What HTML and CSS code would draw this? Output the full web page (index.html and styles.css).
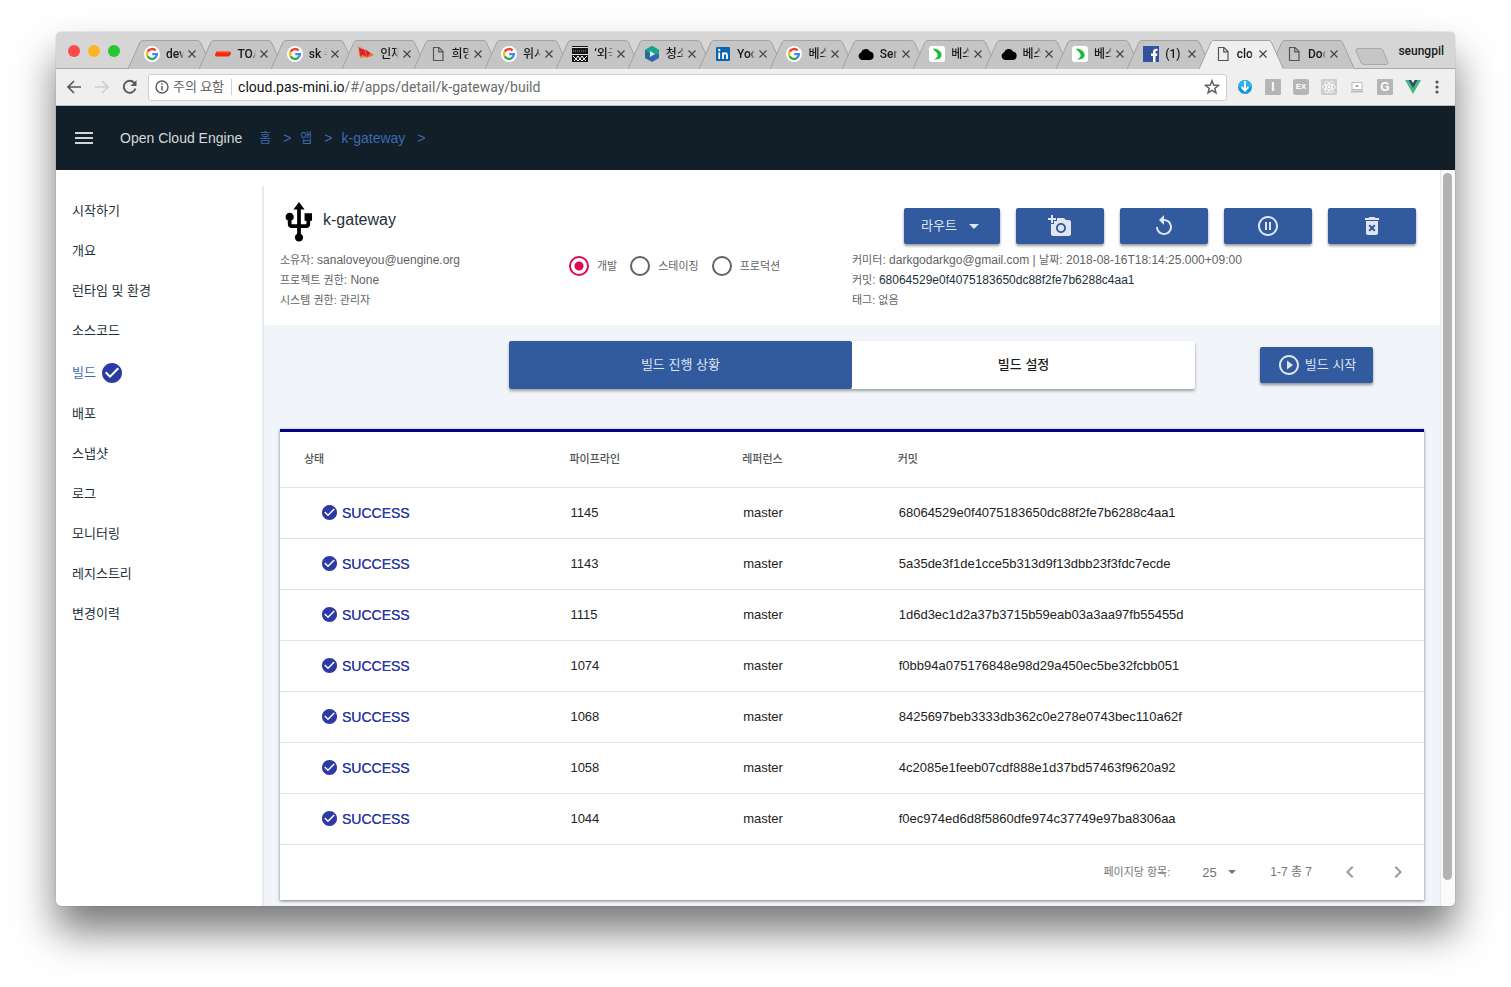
FILE: index.html
```html
<!DOCTYPE html>
<html lang="ko">
<head>
<meta charset="utf-8">
<title>Open Cloud Engine</title>
<link rel="stylesheet" href="styles.css">
</head>
<body>
<svg class="sprite" aria-hidden="true">
  <symbol id="google" viewBox="0 0 16 16"><circle cx="8" cy="8" r="8" fill="#fff"/><g fill="none" stroke-width="2.4"><path d="M11.6 4.5A5 5 0 0 0 3.6 5.7" stroke="#ea4335"/><path d="M3.6 5.7a5 5 0 0 0 0 4.6" stroke="#fbbc05"/><path d="M3.6 10.3a5 5 0 0 0 7.7 1.4" stroke="#34a853"/><path d="M11.3 11.7A5 5 0 0 0 12.9 8.1H8.2" stroke="#4285f4"/></g></symbol>
  <symbol id="doc" viewBox="0 0 16 16"><path d="M3.5 1.5h5.5l4 4v9h-9.5zM8.7 1.8v4h4" fill="none" stroke="#555" stroke-width="1.2"/></symbol>
  <symbol id="cloud" viewBox="0 0 16 16"><path d="M4 14a4 4 0 0 1-1-7.6A5 5 0 0 1 12 5.500a4.300 4.300 0 0 1 0 8.500z" fill="#000"/></symbol>
  <symbol id="leaf" viewBox="0 0 16 16"><rect width="16" height="16" rx="3" fill="#fff"/><path d="M4 2.500C10 3 13 6 12.500 9.500 12 12.500 9.500 13.500 5 13.500 8 12 9 10.500 8.500 8.500 8 6 5 5 4 2.500z" fill="#1fb93a"/></symbol>
  <symbol id="close" viewBox="0 0 10 10"><path d="M1.500 1.500l7 7M8.500 1.500l-7 7" stroke="#444" stroke-width="1.200"/></symbol>
  <symbol id="shape" viewBox="0 0 84 28" preserveAspectRatio="none"><path d="M0 28L12 2Q13 .5 15 .5H69Q71 .5 72 2L84 28" stroke="#a2a2a2" vector-effect="non-scaling-stroke"/></symbol>
  <symbol id="check" viewBox="2 2 20 20"><path d="M12 2C6.480 2 2 6.480 2 12s4.480 10 10 10 10-4.480 10-10S17.520 2 12 2z" fill="#2d3aa5"/><path d="M10 17l-5-5 1.410-1.410L10 14.170l7.590-7.590L19 8z" fill="#fff"/></symbol>
</svg>
<div class="window">
  <header class="tabstrip">
    <div class="lights"><span class="light red"></span><span class="light yellow"></span><span class="light green"></span></div>
    <nav class="tabs" aria-label="탭">
      <div class="tab"><svg class="shape"><use href="#shape"/></svg><svg class="fav"><use href="#google"/></svg><span class="label">dev</span><button class="x" aria-label="닫기"><svg><use href="#close"/></svg></button></div>
      <div class="tab"><svg class="shape"><use href="#shape"/></svg><svg class="fav" viewBox="0 0 16 16"><path d="M2 5.500h12q2 0 2 2-1 3-3 3H1.500Q0 10.500 0 9q0-2 2-3.500z" fill="#f32a10"/><path d="M3 6h11" stroke="#ff6a45"/></svg><span class="label">TOA</span><button class="x" aria-label="닫기"><svg><use href="#close"/></svg></button></div>
      <div class="tab"><svg class="shape"><use href="#shape"/></svg><svg class="fav"><use href="#google"/></svg><span class="label">sk 주</span><button class="x" aria-label="닫기"><svg><use href="#close"/></svg></button></div>
      <div class="tab"><svg class="shape"><use href="#shape"/></svg><svg class="fav" viewBox="0 0 16 16"><path d="M0 0l7 4 1 7-6 1z" fill="#f58220"/><path d="M1 2l6 2 2 7-4-2-3 1z" fill="#d8203b"/><path d="M7 3l9 6-8 3z" fill="#f26a21"/><path d="M8 4l4 3-3 4z" fill="#d5173c"/></svg><span class="label">인재</span><button class="x" aria-label="닫기"><svg><use href="#close"/></svg></button></div>
      <div class="tab"><svg class="shape"><use href="#shape"/></svg><svg class="fav"><use href="#doc"/></svg><span class="label">희망</span><button class="x" aria-label="닫기"><svg><use href="#close"/></svg></button></div>
      <div class="tab"><svg class="shape"><use href="#shape"/></svg><svg class="fav"><use href="#google"/></svg><span class="label">위시</span><button class="x" aria-label="닫기"><svg><use href="#close"/></svg></button></div>
      <div class="tab"><svg class="shape"><use href="#shape"/></svg><svg class="fav" viewBox="0 0 16 16"><rect width="16" height="16" fill="#161616"/><path d="M0 1.500h16M0 8.500h16" stroke="#ddd"/><path d="M1 5h14" stroke="#999" stroke-dasharray="1 1"/><path d="M1 10l3 3 2-3 2 3 2-3 2 3 3-3M2 15l2-2 2 2 2-2 2 2 2-2 2 2" fill="none" stroke="#fff"/></svg><span class="label">‘외국</span><button class="x" aria-label="닫기"><svg><use href="#close"/></svg></button></div>
      <div class="tab"><svg class="shape"><use href="#shape"/></svg><svg class="fav" viewBox="0 0 16 16"><path d="M8 0l7 4v8l-7 4-7-4V4z" fill="#3564b4"/><path d="M8 0l7 4v4L5 10 1 12V4z" fill="#16a58a"/><path d="M1 4l5 3v7l-5-2z" fill="#276b9b"/><path d="M6 5l5 3-5 3z" fill="#d7f0f4"/></svg><span class="label">청소</span><button class="x" aria-label="닫기"><svg><use href="#close"/></svg></button></div>
      <div class="tab"><svg class="shape"><use href="#shape"/></svg><svg class="fav" viewBox="0 0 16 16"><rect x="1" y="1" width="14" height="14" rx="1" fill="#0a66ae"/><path d="M4.200 6.500V13M8 13V6.500M8 9.500c0-3 4-3 4 0V13" fill="none" stroke="#fff" stroke-width="1.800"/><circle cx="4.200" cy="4" r="1.200" fill="#fff"/></svg><span class="label">Yoo</span><button class="x" aria-label="닫기"><svg><use href="#close"/></svg></button></div>
      <div class="tab"><svg class="shape"><use href="#shape"/></svg><svg class="fav"><use href="#google"/></svg><span class="label">베스</span><button class="x" aria-label="닫기"><svg><use href="#close"/></svg></button></div>
      <div class="tab"><svg class="shape"><use href="#shape"/></svg><svg class="fav"><use href="#cloud"/></svg><span class="label">Ser</span><button class="x" aria-label="닫기"><svg><use href="#close"/></svg></button></div>
      <div class="tab"><svg class="shape"><use href="#shape"/></svg><svg class="fav"><use href="#leaf"/></svg><span class="label">베스</span><button class="x" aria-label="닫기"><svg><use href="#close"/></svg></button></div>
      <div class="tab"><svg class="shape"><use href="#shape"/></svg><svg class="fav"><use href="#cloud"/></svg><span class="label">베스</span><button class="x" aria-label="닫기"><svg><use href="#close"/></svg></button></div>
      <div class="tab"><svg class="shape"><use href="#shape"/></svg><svg class="fav"><use href="#leaf"/></svg><span class="label">베스</span><button class="x" aria-label="닫기"><svg><use href="#close"/></svg></button></div>
      <div class="tab"><svg class="shape"><use href="#shape"/></svg><svg class="fav" viewBox="0 0 16 16"><rect width="16" height="16" fill="#3450a1"/><path d="M10 16v-6H8V7.500h2V6c0-2.500 1.500-3.500 4.500-3.200v2.200c-1.500 0-2 .2-2 1.400v1.100h2L14 10h-1.500v6z" fill="#fff"/></svg><span class="label">(1)</span><button class="x" aria-label="닫기"><svg><use href="#close"/></svg></button></div>
      <div class="tab active"><svg class="shape"><use href="#shape"/></svg><svg class="fav"><use href="#doc"/></svg><span class="label">clo</span><button class="x" aria-label="닫기"><svg><use href="#close"/></svg></button></div>
      <div class="tab"><svg class="shape"><use href="#shape"/></svg><svg class="fav"><use href="#doc"/></svg><span class="label">Doc</span><button class="x" aria-label="닫기"><svg><use href="#close"/></svg></button></div>
    </nav>
    <button class="newtab" aria-label="새 탭"><svg viewBox="0 0 34 17"><path d="M3 .5h22q2 0 3 2l5 12q0 2-2 2H9q-2 0-3-2L1 3Q.5.5 3 .5z" fill="#c6c6c6" stroke="#a8a8a8"/></svg></button>
    <span class="profile">seungpil</span>
  </header>
  <div class="toolbar">
    <button class="tool" aria-label="뒤로"><svg viewBox="0 0 16 16"><path d="M15 8H2M8 2L2 8l6 6" fill="none" stroke="#5a5a5a" stroke-width="1.700"/></svg></button>
    <button class="tool" aria-label="앞으로"><svg viewBox="0 0 16 16"><path d="M1 8h13M8 2l6 6-6 6" fill="none" stroke="#cecece" stroke-width="1.700"/></svg></button>
    <button class="tool" aria-label="새로고침"><svg viewBox="0 0 16 16"><path d="M13.500 9.500A6 6 0 1 1 12.300 3.800" fill="none" stroke="#5a5a5a" stroke-width="1.900"/><path d="M14.500 1v6h-6z" fill="#5a5a5a"/></svg></button>
    <div class="omnibox">
      <svg class="info" viewBox="0 0 14 14"><circle cx="7" cy="7" r="6" fill="none" stroke="#5a5a5a" stroke-width="1.400"/><path d="M7 6v4.500M7 3.300v1.500" stroke="#5a5a5a" stroke-width="1.500"/></svg>
      <span class="warn">주의 요함</span>
      <span class="url"><b>cloud.pas-mini.io</b>/#/apps/detail/k-gateway/build</span>
      <button class="star" aria-label="북마크"><svg viewBox="0 0 16 16"><path d="M8 1.800l1.700 4.300 4.700.3-3.600 3 1.200 4.500L8 11.400l-4 2.500 1.200-4.500-3.600-3 4.700-.3z" fill="none" stroke="#5f6063" stroke-width="1.500"/></svg></button>
    </div>
    <div class="extensions">
      <svg viewBox="0 0 16 16"><circle cx="8" cy="8" r="7" fill="#1296dc"/><path d="M1 8a7 7 0 0 1 14 0" fill="#2fb3e8"/><path d="M8 2v9M4.500 8L8 11.500 11.500 8" fill="none" stroke="#fff" stroke-width="2"/></svg>
      <span class="ext">I</span>
      <span class="ext small">EX</span>
      <svg viewBox="0 0 16 16"><rect width="16" height="16" rx="1" fill="#cdcdcd"/><g fill="none" stroke="#fff" stroke-width=".8"><ellipse cx="8" cy="8" rx="6.500" ry="2.600"/><ellipse cx="8" cy="8" rx="6.500" ry="2.600" transform="rotate(60 8 8)"/><ellipse cx="8" cy="8" rx="6.500" ry="2.600" transform="rotate(120 8 8)"/></g><circle cx="8" cy="8" r="1.300" fill="#fff"/></svg>
      <svg viewBox="0 0 16 16"><rect x="3" y="3.500" width="10" height="7" fill="#fff" stroke="#bbb"/><path d="M6.500 6h3v2h-3z" fill="#aaa"/><path d="M2 12.500h12" stroke="#bbb" stroke-width="2"/></svg>
      <span class="ext">G</span>
      <svg viewBox="0 0 16 16"><path d="M0 1h16L8 15z" fill="#41b883"/><path d="M3.500 1h9L8 9z" fill="#34495e"/><path d="M6.200 1h3.600L8 4z" fill="#eee"/></svg>
    </div>
    <button class="tool dots" aria-label="메뉴"><svg viewBox="0 0 16 16"><g fill="#555"><circle cx="8" cy="3" r="1.600"/><circle cx="8" cy="8" r="1.600"/><circle cx="8" cy="13" r="1.600"/></g></svg></button>
  </div>
  <div class="appbar">
    <button class="menu" aria-label="메뉴"><svg viewBox="0 0 18 12"><path d="M0 1h18M0 6h18M0 11h18" stroke="#d3d5d7" stroke-width="2"/></svg></button>
    <span class="brand">Open Cloud Engine</span>
    <nav class="crumbs"><a class="short" href="#home">홈</a><span class="sep">&gt;</span><a class="short" href="#apps">앱</a><span class="sep">&gt;</span><a href="#k-gateway">k-gateway</a><span class="sep">&gt;</span></nav>
  </div>
  <div class="page">
    <nav class="sidebar">
      <a href="#start">시작하기</a>
      <a href="#summary">개요</a>
      <a href="#runtime">런타임 및 환경</a>
      <a href="#source">소스코드</a>
      <a href="#build" class="current">빌드 <svg><use href="#check"/></svg></a>
      <a href="#deploy">배포</a>
      <a href="#snapshot">스냅샷</a>
      <a href="#log">로그</a>
      <a href="#monitor">모니터링</a>
      <a href="#registry">레지스트리</a>
      <a href="#history">변경이력</a>
    </nav>
    <main class="main">
      <section class="summary">
        <div>
          <div class="title">
            <svg viewBox="4 1 16 22"><path d="M15 7v4h1v2h-3V5h2l-3-4-3 4h2v8H8v-2.070c.7-.37 1.200-1.080 1.200-1.930 0-1.210-.99-2.200-2.200-2.200-1.210 0-2.200.99-2.200 2.200 0 .85.5 1.560 1.200 1.930V13c0 1.110.89 2 2 2h3v3.050c-.71.37-1.200 1.100-1.200 1.950 0 1.220.99 2.200 2.200 2.200 1.210 0 2.200-.98 2.200-2.200 0-.85-.49-1.580-1.200-1.950V15h3c1.110 0 2-.89 2-2v-2h1V7h-4z"/></svg>
            <h1>k-gateway</h1>
          </div>
          <p><span class="ko">소유자</span>: sanaloveyou@uengine.org</p>
          <p><span class="ko">프로젝트 권한</span>: None</p>
          <p><span class="ko">시스템 권한: 관리자</span></p>
        </div>
        <div class="stages">
          <label><input type="radio" name="stage" checked>개발</label>
          <label><input type="radio" name="stage">스테이징</label>
          <label><input type="radio" name="stage">프로덕션</label>
        </div>
        <div>
          <div class="actions">
            <button class="btn route">라우트<svg class="caret" viewBox="0 0 10 5"><path d="M0 0h10L5 5z"/></svg></button>
            <button class="btn" aria-label="스냅샷"><svg viewBox="0 0 24 24"><path d="M3 4V1h2v3h3v2H5v3H3V6H0V4h3zm3 6V7h3V4h7l1.830 2H21c1.100 0 2 .9 2 2v12c0 1.100-.9 2-2 2H5c-1.100 0-2-.9-2-2V10h3zm7 9c2.760 0 5-2.240 5-5s-2.240-5-5-5-5 2.240-5 5 2.240 5 5 5zm-3.200-5c0 1.770 1.430 3.200 3.200 3.200s3.200-1.430 3.200-3.200-1.430-3.200-3.200-3.200-3.200 1.430-3.200 3.200z"/></svg></button>
            <button class="btn" aria-label="재시작"><svg viewBox="0 0 24 24"><path d="M12 5V1L7 6l5 5V7c3.310 0 6 2.690 6 6s-2.690 6-6 6-6-2.690-6-6H4c0 4.420 3.580 8 8 8s8-3.580 8-8-3.580-8-8-8z"/></svg></button>
            <button class="btn" aria-label="일시정지"><svg viewBox="0 0 24 24"><path d="M9 16h2V8H9v8zm3-14C6.480 2 2 6.480 2 12s4.480 10 10 10 10-4.480 10-10S17.520 2 12 2zm0 18c-4.410 0-8-3.590-8-8s3.590-8 8-8 8 3.590 8 8-3.590 8-8 8zm1-4h2V8h-2v8z"/></svg></button>
            <button class="btn" aria-label="삭제"><svg viewBox="0 0 24 24"><path d="M6 19c0 1.100.9 2 2 2h8c1.100 0 2-.9 2-2V7H6v12zm2.460-7.120l1.410-1.410L12 12.590l2.120-2.120 1.410 1.410L13.410 14l2.120 2.120-1.410 1.410L12 15.410l-2.120 2.120-1.410-1.410L10.590 14l-2.130-2.120zM15.500 4l-1-1h-5l-1 1H5v2h14V4z"/></svg></button>
          </div>
          <p><span class="ko">커미터</span>: darkgodarkgo@gmail.com | <span class="ko">날짜</span>: 2018-08-16T18:14:25.000+09:00</p>
          <p><span class="ko">커밋</span>: <a href="#commit">68064529e0f4075183650dc88f2fe7b6288c4aa1</a></p>
          <p><span class="ko">태그: 없음</span></p>
        </div>
      </section>
      <section class="builds">
        <div class="switcher">
          <div class="segments"><button class="segment on">빌드 진행 상황</button><button class="segment">빌드 설정</button></div>
          <div class="start"><button class="btn"><svg viewBox="0 0 24 24"><path d="M10 16.500l6-4.500-6-4.500v9zM12 2C6.480 2 2 6.480 2 12s4.480 10 10 10 10-4.480 10-10S17.520 2 12 2zm0 18c-4.410 0-8-3.590-8-8s3.590-8 8-8 8 3.590 8 8-3.590 8-8 8z"/></svg>빌드 시작</button></div>
        </div>
        <div class="card">
          <table>
            <colgroup><col class="c-state"><col class="c-pipe"><col class="c-ref"><col></colgroup>
            <thead><tr><th>상태</th><th>파이프라인</th><th>레퍼런스</th><th>커밋</th></tr></thead>
            <tbody>
              <tr><td><span class="ok"><svg><use href="#check"/></svg>SUCCESS</span></td><td>1145</td><td>master</td><td>68064529e0f4075183650dc88f2fe7b6288c4aa1</td></tr>
              <tr><td><span class="ok"><svg><use href="#check"/></svg>SUCCESS</span></td><td>1143</td><td>master</td><td>5a35de3f1de1cce5b313d9f13dbb23f3fdc7ecde</td></tr>
              <tr><td><span class="ok"><svg><use href="#check"/></svg>SUCCESS</span></td><td>1115</td><td>master</td><td>1d6d3ec1d2a37b3715b59eab03a3aa97fb55455d</td></tr>
              <tr><td><span class="ok"><svg><use href="#check"/></svg>SUCCESS</span></td><td>1074</td><td>master</td><td>f0bb94a075176848e98d29a450ec5be32fcbb051</td></tr>
              <tr><td><span class="ok"><svg><use href="#check"/></svg>SUCCESS</span></td><td>1068</td><td>master</td><td>8425697beb3333db362c0e278e0743bec110a62f</td></tr>
              <tr><td><span class="ok"><svg><use href="#check"/></svg>SUCCESS</span></td><td>1058</td><td>master</td><td>4c2085e1feeb07cdf888e1d37bd57463f9620a92</td></tr>
              <tr><td><span class="ok"><svg><use href="#check"/></svg>SUCCESS</span></td><td>1044</td><td>master</td><td>f0ec974ed6d8f5860dfe974c37749e97ba8306aa</td></tr>
            </tbody>
          </table>
          <div class="pager">
            <label for="rows">페이지당 항목:</label>
            <div class="rows"><select id="rows"><option>25</option></select><svg viewBox="0 0 10 5"><path d="M1 0h8L5 4z"/></svg></div>
            <span class="range">1-7 총 7</span>
            <button aria-label="이전"><svg viewBox="0 0 24 24"><path d="M15.410 7.410L14 6l-6 6 6 6 1.410-1.410L10.830 12z"/></svg></button>
            <button aria-label="다음"><svg viewBox="0 0 24 24"><path d="M10 6L8.590 7.410 13.170 12l-4.580 4.590L10 18l6-6z"/></svg></button>
          </div>
        </div>
      </section>
    </main>
    <div class="scrollbar"><div class="thumb"></div></div>
  </div>
</div>
</body>
</html>
```

FILE: styles.css
```css
* { box-sizing: border-box; }
body {
  margin: 0;
  padding: 32px 56px 80px;
  background: #fff;
  color: #636363;
  font-family: "Liberation Sans", "Noto Sans CJK KR", sans-serif;
  font-size: 13px;
  line-height: 16px;
}
button {
  margin: 0;
  padding: 0;
  border: 0;
  background: none;
  color: inherit;
  font: inherit;
}
a { text-decoration: none; }
svg { display: block; flex: none; }
.sprite { position: absolute; width: 0; height: 0; }

.window {
  overflow: visible;
  border-radius: 5px;
  background: #fff;
  box-shadow: 0 25px 40px rgba(0, 0, 0, .53), 0 0 1px rgba(0, 0, 0, .5);
}

.tabstrip {
  display: flex;
  align-items: flex-end;
  height: 37px;
  border-bottom: 1px solid #a9a9a9;
  border-radius: 5px 5px 0 0;
  background: #d6d6d6;
  color: #1a1a1a;
  font-family: Roboto, "Noto Sans CJK KR", sans-serif;
  font-size: 12px;
}
.lights { display: flex; gap: 8px; width: 72px; padding: 0 0 11px 12px; }
.light { width: 12px; height: 12px; border-radius: 50%; }
.red { background: #fc4b49; }
.yellow { background: #fdb427; }
.green { background: #27c732; }
.tabs { display: flex; flex: 1; min-width: 0; height: 28px; }
.tab {
  position: relative;
  display: flex;
  flex: 1;
  align-items: center;
  min-width: 0;
  padding-left: 16px;
}
.shape {
  position: absolute;
  top: 0;
  left: 0;
  width: calc(100% + 13px);
  height: 29px;
  fill: #c5c5c5;
}
.active { z-index: 1; }
.active .shape { fill: #efefef; }
.fav { position: relative; width: 16px; height: 16px; }
.label {
  position: relative;
  flex: 1;
  min-width: 0;
  margin-left: 6px;
  overflow: hidden;
  white-space: nowrap;
  font-weight: 500;
  mask-image: linear-gradient(90deg, #000 75%, transparent);
}
.x { position: relative; margin: 0 2px 0 3px; }
.x svg { width: 10px; height: 10px; }
.newtab { margin: 0 9px 3px 14px; }
.newtab svg { width: 34px; height: 17px; }
.profile { padding: 0 11px 9px 0; font-weight: 500; }

.toolbar {
  display: flex;
  align-items: center;
  height: 37px;
  padding: 0 10px;
  border-bottom: 1px solid #b9b9b9;
  background: #efefef;
}
.tool { width: 16px; margin-right: 12px; }
.tool svg { width: 16px; height: 16px; }
.omnibox {
  display: flex;
  flex: 1;
  align-items: center;
  height: 27px;
  margin: 0 10px 0 -2px;
  padding: 0 6px;
  border: 1px solid #cecece;
  border-radius: 3px;
  background: #fff;
  font-family: Roboto, "Noto Sans CJK KR", sans-serif;
  font-size: 14px;
}
.info { width: 14px; height: 14px; }
.warn { margin-left: 4px; padding-right: 7px; border-right: 1px solid #d0d0d0; font-size: 13px; }
.url { flex: 1; margin-left: 6px; color: #6b6b6b; }
.url b { color: #111; font-weight: 400; }
.star svg { width: 16px; height: 16px; }
.extensions { display: flex; gap: 12px; margin-right: 8px; }
.extensions svg { width: 16px; height: 16px; }
.ext {
  width: 16px;
  border-radius: 1px;
  background: #b5b5b5;
  color: #fff;
  font-size: 12px;
  font-weight: 700;
  text-align: center;
}
.small { border-radius: 3px; font-size: 8px; }
.dots { margin-right: 0; }

.appbar {
  display: flex;
  align-items: center;
  height: 64px;
  padding-left: 19px;
  background: #131f28;
  color: #d5d8da;
  font-size: 14px;
}
.menu svg { width: 18px; height: 12px; }
.brand { margin-left: 27px; }
.crumbs { display: flex; align-items: center; margin-left: 17px; color: #3a6ab0; }
.crumbs a { color: inherit; }
.crumbs .short { font-size: 13px; }
.sep { margin: 0 9px 0 12px; }

.page { display: flex; }
.sidebar {
  display: flex;
  flex-direction: column;
  width: 208px;
  margin-top: 16px;
  padding: 5px 16px;
  border-right: 2px solid #e6eaee;
}
.sidebar a { color: #22303a; font-size: 13px; line-height: 40px; }
.sidebar .current {
  display: flex;
  align-items: center;
  gap: 6px;
  color: #3c6cb4;
  line-height: 43px;
}
.current svg { width: 20px; height: 20px; }
.main { flex: 1; min-width: 0; }

.summary {
  display: grid;
  grid-template-columns: 1fr 1fr 2fr;
  padding: 32px 16px 15px;
}
.summary p { margin: 0; font-size: 12px; line-height: 20px; white-space: nowrap; }
.summary p a { color: #22303a; }
.ko { font-size: 11px; }
.title { display: flex; height: 48px; }
.title svg { width: 30px; height: 41px; margin-left: 4px; }
.title h1 {
  margin: 0 0 0 9px;
  color: #22303a;
  font-size: 16px;
  font-weight: 400;
  line-height: 36px;
}
.stages { display: flex; margin-top: 52px; padding-left: 3px; }
.stages label {
  display: flex;
  align-items: center;
  height: 24px;
  margin-right: 13px;
  font-size: 11px;
}
.stages input {
  width: 20px;
  height: 20px;
  margin: 0 8px 0 0;
  appearance: none;
  border: 2px solid #616161;
  border-radius: 50%;
}
.stages input:checked {
  border-color: #e0084f;
  background: radial-gradient(circle, #e0084f 4px, #fff 5px);
}
.actions {
  display: flex;
  gap: 16px;
  align-items: center;
  justify-content: flex-end;
  height: 48px;
  padding-right: 8px;
}
.btn {
  display: flex;
  align-items: center;
  justify-content: center;
  width: 88px;
  height: 36px;
  border-radius: 2px;
  background: #315a9f;
  box-shadow: 0 2px 3px rgba(0, 0, 0, .4);
  color: #dfe6f1;
  font-size: 13px;
}
.btn svg { width: 24px; height: 24px; fill: currentColor; }
.route { width: 96px; padding-right: 4px; }
.route .caret { width: 10px; height: 5px; margin-left: 12px; }

.builds { padding: 16px 16px 6px; background: #f1f4f9; }
.switcher { display: grid; grid-template-columns: 3fr 1fr; margin-left: 20%; }
.segments {
  display: grid;
  grid-template-columns: 1fr 1fr;
  height: 48px;
  border-radius: 2px;
  background: #fff;
  box-shadow: 0 2px 3px rgba(0, 0, 0, .35);
}
.segment { color: #1c1c1c; font-size: 13px; font-weight: 500; }
.on { border-radius: 2px; background: #315a9f; color: #dfe6f1; font-weight: 400; }
.start { display: flex; align-items: center; justify-content: center; padding-left: 14px; }
.start .btn { width: 113px; }
.start svg { margin-right: 4px; }

.card {
  margin-top: 40px;
  border-top: 3px solid #04047e;
  background: #fff;
  box-shadow: 0 1px 3px rgba(0, 0, 0, .5);
}
table { width: 100%; border-collapse: collapse; table-layout: fixed; }
.c-state { width: 23.2%; }
.c-pipe { width: 15.1%; }
.c-ref { width: 13.6%; }
th, td { padding: 0 24px; text-align: left; }
tr { border-bottom: 1px solid #e2e2e2; }
th { height: 55px; color: #555; font-size: 11px; font-weight: 500; }
td { height: 51px; padding-left: 25px; color: #222; font-size: 13px; }
.ok {
  display: flex;
  align-items: center;
  gap: 5px;
  margin-left: 17px;
  color: #2d3aa5;
  font-size: 14px;
  text-shadow: 0 0 currentColor;
}
.ok svg { width: 15px; height: 15px; }
.pager {
  display: flex;
  align-items: center;
  justify-content: flex-end;
  height: 55px;
  padding-right: 14px;
  color: #757575;
  font-size: 11px;
}
.rows { display: flex; align-items: center; margin: 0 33px 0 32px; }
.rows select {
  width: 25px;
  padding: 0;
  appearance: none;
  border: 0;
  background: none;
  color: inherit;
  font: 13px "Liberation Sans", sans-serif;
}
.rows svg { width: 10px; height: 5px; fill: #757575; }
.range { margin-right: 26px; font-size: 12px; }
.pager button + button { margin-left: 24px; }
.pager button svg { width: 24px; height: 24px; fill: #9b9b9b; }

.scrollbar {
  display: flex;
  width: 15px;
  padding: 3px 3px 26px 2px;
  border-left: 1px solid #e8e8e8;
  border-radius: 0 0 5px 0;
  background: #fafafa;
}
.thumb { flex: 1; border-radius: 5px; background: #b3b3b3; }
```
